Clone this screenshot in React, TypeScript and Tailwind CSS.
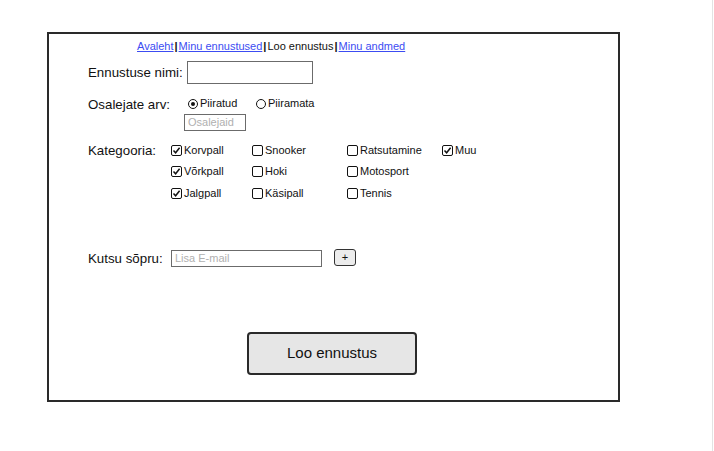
import React from "react";

const font = { fontFamily: '"Liberation Sans", Arial, sans-serif' };

function Check({ checked, label }: { checked?: boolean; label: string }) {
  return (
    <div className="flex items-center h-[14px]">
      <div className="w-[11px] h-[11px] border-[1.5px] border-[#111] rounded-[2px] flex items-center justify-center bg-white">
        {checked && (
          <svg width="9" height="9" viewBox="0 0 9 9">
            <path d="M1.5 4.6 L3.6 6.8 L7.6 1.8" fill="none" stroke="#111" strokeWidth="1.5" />
          </svg>
        )}
      </div>
      <span className="ml-[2px] text-[11px] leading-[13px] text-[#111] whitespace-nowrap">{label}</span>
    </div>
  );
}

function Radio({ checked, label }: { checked?: boolean; label: string }) {
  return (
    <div className="flex items-center">
      <div className="w-[10px] h-[10px] rounded-full border-[1.5px] border-[#111] flex items-center justify-center">
        {checked && <div className="w-[4px] h-[4px] rounded-full bg-[#111]" />}
      </div>
      <span className="ml-[2px] text-[11px] leading-[13px] text-[#111] whitespace-nowrap">{label}</span>
    </div>
  );
}

export default function App() {
  return (
    <div className="w-[714px] h-[451px] bg-white flex" style={font}>
      <div className="w-[712px] h-full pt-[32px] pl-[47px]">
        <div className="w-[573px] h-[370px] border-2 border-[#2a2a2a]">
          <div className="ml-[88px] mt-[6px] h-[13px] flex items-center text-[11px] leading-[13px] whitespace-nowrap">
            <span className="text-[#3c4cf2] underline">Avaleht</span>
            <span className="font-bold text-[#111] mx-[1px]">|</span>
            <span className="text-[#3c4cf2] underline">Minu ennustused</span>
            <span className="font-bold text-[#111] mx-[1px]">|</span>
            <span className="text-[#111]">Loo ennustus</span>
            <span className="font-bold text-[#111] mx-[1px]">|</span>
            <span className="text-[#3c4cf2] underline">Minu andmed</span>
          </div>

          <div className="ml-[39px] mt-[8px] flex items-center h-[23px]">
            <div className="w-[99px] text-[13.3px] leading-[16px] text-[#111] whitespace-nowrap">Ennustuse nimi:</div>
            <div className="w-[126px] h-[23px] border border-[#6b6b6b] bg-white" />
          </div>

          <div className="ml-[39px] mt-[12px] flex">
            <div className="w-[96px] text-[13.3px] leading-[16px] text-[#111] mt-[1px] whitespace-nowrap">Osalejate arv:</div>
            <div className="flex flex-col">
              <div className="flex pl-[4px] mt-[1px]">
                <div className="w-[68px]">
                  <Radio checked label="Piiratud" />
                </div>
                <Radio label="Piiramata" />
              </div>
              <div className="mt-[4px] w-[62px] h-[17px] border border-[#6b6b6b] flex items-center pl-[3px] text-[11px] text-[#b0b0b0]">
                Osalejaid
              </div>
            </div>
          </div>

          <div className="ml-[39px] mt-[12px] flex">
            <div className="w-[83px] text-[13.3px] leading-[16px] text-[#111] whitespace-nowrap">Kategooria:</div>
            <div className="grid grid-cols-[81px_95px_95px_60px] gap-y-[7.5px]">
              <Check checked label="Korvpall" />
              <Check label="Snooker" />
              <Check label="Ratsutamine" />
              <Check checked label="Muu" />
              <Check checked label="Võrkpall" />
              <Check label="Hoki" />
              <Check label="Motosport" />
              <div />
              <Check checked label="Jalgpall" />
              <Check label="Käsipall" />
              <Check label="Tennis" />
              <div />
            </div>
          </div>

          <div className="ml-[39px] mt-[50px] flex items-center h-[17px]">
            <div className="w-[83px] text-[13.3px] leading-[16px] text-[#111] whitespace-nowrap">Kutsu sõpru:</div>
            <div className="w-[151px] h-[17px] border border-[#6b6b6b] flex items-center pl-[3px] text-[11px] text-[#b0b0b0]">
              Lisa E-mail
            </div>
            <div className="ml-[12px] -mt-[2px] w-[22px] h-[17px] border border-[#333] rounded-[3px] bg-[#ececec] flex items-center justify-center text-[11px] leading-none text-[#111]">
              +
            </div>
          </div>

          <div className="ml-[198px] mt-[65px] w-[170px] h-[43px] border-2 border-[#2a2a2a] rounded-[4px] bg-[#e6e6e6] flex items-center justify-center text-[15px] text-[#111]">
            Loo ennustus
          </div>
        </div>
      </div>
      <div className="w-[1px] h-full bg-[#e3e3e3]" />
      <div className="w-[1px] h-full bg-white" />
    </div>
  );
}
